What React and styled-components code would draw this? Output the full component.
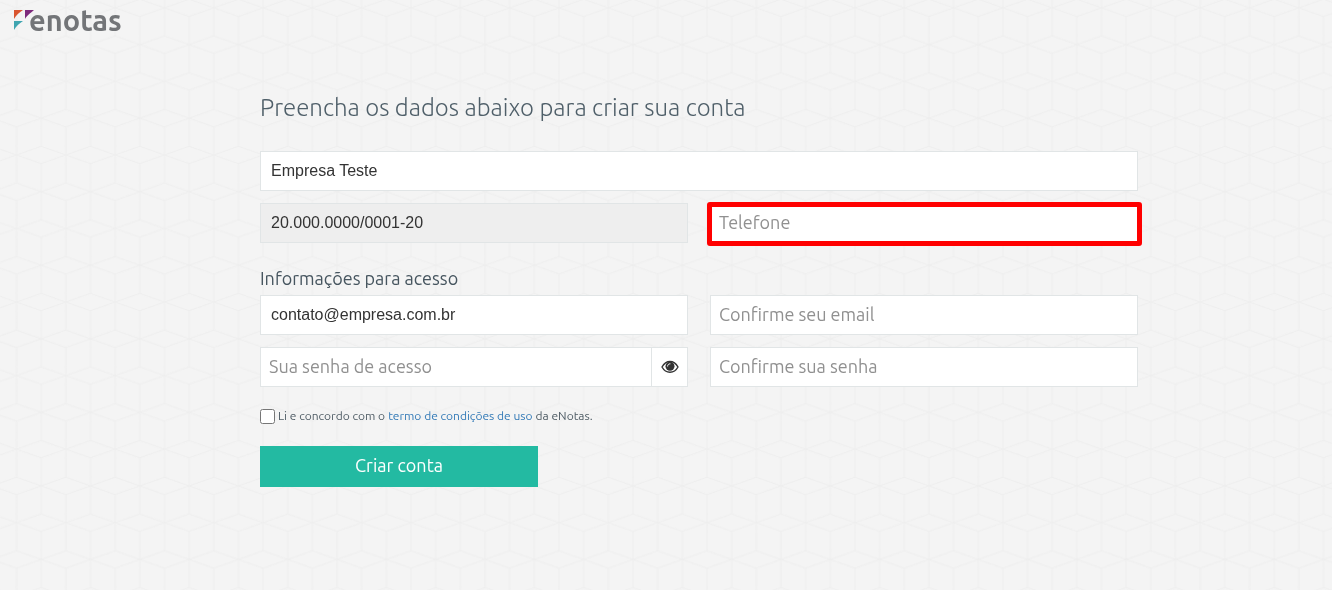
import React from "react";
import styled, { createGlobalStyle } from "styled-components";

const GlobalStyle = createGlobalStyle`
  * {
    box-sizing: border-box;
  }

  body {
    margin: 0;
    background: #f4f4f4;
    color: #4f5c65;
    font-family: Ubuntu, "Noto Sans", sans-serif;
  }
`;

const Backdrop = styled.svg`
  position: fixed;
  inset: 0;
  z-index: -1;
  width: 100%;
  height: 100%;
`;

const Header = styled.header`
  display: flex;
  align-items: flex-start;
  padding: 4px 14px 0;
`;

const Logo = styled.a`
  display: flex;
  align-items: flex-start;
  color: #737578;
  font-family: Ubuntu, "Noto Sans", sans-serif;
  font-size: 29px;
  font-weight: 600;
  line-height: 32px;
  text-decoration: none;

  svg {
    width: 20px;
    height: 20px;
    margin: 6px -5px 0 0;
  }
`;

const Main = styled.main`
  padding: 56px 194px 40px 260px;
`;

const Title = styled.h1`
  margin: 0 0 27px;
  color: #4f5f69;
  font-size: 24px;
  font-weight: 300;
  line-height: 32px;
`;

const Fields = styled.div`
  display: grid;
  grid-template-columns: 1fr 1fr;
  gap: 12px 22px;
`;

const Field = styled.div`
  position: relative;
  display: flex;
  grid-column: ${({ $wide }) => ($wide ? "1 / -1" : "auto")};
`;

const HighlightedField = styled(Field)`
  &::after {
    content: "";
    position: absolute;
    inset: -1px -4px -3px -3px;
    border: 5px solid #ff0000;
    border-radius: 3px;
    pointer-events: none;
  }
`;

const Input = styled.input`
  flex: 1;
  min-width: 0;
  height: 40px;
  padding: 0 10px;
  border: 1px solid #e1e5e6;
  border-radius: 0;
  background: ${({ readOnly }) => (readOnly ? "#eeeeee" : "#ffffff")};
  color: #333333;
  font-family: "Liberation Sans", Arial, sans-serif;
  font-size: 16px;
  outline: none;

  &:placeholder-shown {
    padding: 0 8px 2px;
    font-family: Ubuntu, "Noto Sans", sans-serif;
    font-size: 18px;
  }

  &::placeholder {
    color: #909090;
    opacity: 1;
  }
`;

const RevealButton = styled.button`
  display: flex;
  align-items: center;
  justify-content: center;
  width: 36px;
  padding: 0;
  border: 1px solid #e1e5e6;
  border-left: none;
  background: #ffffff;
  cursor: pointer;

  svg {
    width: 18px;
    height: 14px;
  }
`;

const SectionTitle = styled.h2`
  margin: 22px 0 4px;
  color: #46555f;
  font-size: 18px;
  font-weight: 400;
  line-height: 26px;
`;

const Terms = styled.div`
  display: flex;
  align-items: center;
  gap: 3px;
  margin: 18px 0 19px;
  font-size: 12px;
  line-height: 22px;

  input {
    width: 15px;
    height: 15px;
    margin: 0;
  }

  a {
    color: #337ab7;
    text-decoration: none;
  }
`;

const SubmitButton = styled.button`
  width: 278px;
  height: 41px;
  padding: 0 0 4px;
  border: none;
  background: #23baa2;
  color: #ffffff;
  font-family: inherit;
  font-size: 18px;
  cursor: pointer;
`;

const CubePattern = () => (
  <Backdrop aria-hidden="true">
    <defs>
      <pattern
        id="cubes"
        x="16.5"
        y="81.4"
        width="49.32"
        height="73.55"
        patternUnits="userSpaceOnUse"
      >
        <path
          d="M0 0L24.66 8.7L49.32 0M0 73.55L24.66 64.85L49.32 73.55M0 28.08L24.66 36.78L0 45.48M49.32 28.08L24.66 36.78L49.32 45.48M24.66 8.7V64.85M0 0V28.08M0 45.48V73.55M49.32 0V28.08M49.32 45.48V73.55"
          fill="none"
          stroke="#eeeeee"
        />
      </pattern>
    </defs>
    <rect width="100%" height="100%" fill="url(#cubes)" />
  </Backdrop>
);

const LogoMark = () => (
  <svg viewBox="0 0 20 20" aria-hidden="true">
    <path d="M0 0H9C6 2 2 5 0 9Z" fill="#d9552f" />
    <path d="M11 0H20C18 2 13 5 11 9Z" fill="#7d2a7c" />
    <path d="M0 11H9C6 13 2 16 0 20Z" fill="#3fa5b0" />
  </svg>
);

const EyeIcon = () => (
  <svg viewBox="0 0 18 14" aria-hidden="true">
    <path
      d="M1 7C3 3.4 6 1.5 9 1.5S15 3.4 17 7C15 10.6 12 12.2 9 12.2S3 10.6 1 7Z"
      fill="none"
      stroke="#333333"
      strokeWidth="1.4"
    />
    <circle cx="9" cy="6.3" r="4.5" fill="#333333" />
    <path
      d="M6.6 6.1C6.6 4.700 7.500 3.800 9 3.800"
      fill="none"
      stroke="#ffffff"
      strokeWidth="1"
      strokeLinecap="round"
    />
  </svg>
);

export default function App() {
  return (
    <>
      <GlobalStyle />
      <CubePattern />
      <Header>
        <Logo href="#">
          <LogoMark />
          enotas
        </Logo>
      </Header>
      <Main>
        <Title>Preencha os dados abaixo para criar sua conta</Title>
        <form>
          <Fields>
            <Field $wide>
              <Input aria-label="Empresa" defaultValue="Empresa Teste" />
            </Field>
            <Field>
              <Input
                aria-label="CNPJ"
                defaultValue="20.000.0000/0001-20"
                readOnly
              />
            </Field>
            <HighlightedField>
              <Input type="tel" aria-label="Telefone" placeholder="Telefone" />
            </HighlightedField>
          </Fields>
          <SectionTitle>Informações para acesso</SectionTitle>
          <Fields>
            <Field>
              <Input
                type="email"
                aria-label="Email"
                defaultValue="contato@empresa.com.br"
              />
            </Field>
            <Field>
              <Input
                type="email"
                aria-label="Confirme seu email"
                placeholder="Confirme seu email"
              />
            </Field>
            <Field>
              <Input
                type="password"
                aria-label="Sua senha de acesso"
                placeholder="Sua senha de acesso"
              />
              <RevealButton type="button" aria-label="Mostrar senha">
                <EyeIcon />
              </RevealButton>
            </Field>
            <Field>
              <Input
                type="password"
                aria-label="Confirme sua senha"
                placeholder="Confirme sua senha"
              />
            </Field>
          </Fields>
          <Terms>
            <input type="checkbox" id="terms" />
            <label htmlFor="terms">Li e concordo com o</label>
            <a href="#">termo de condições de uso</a>
            <span>da eNotas.</span>
          </Terms>
          <SubmitButton type="button">Criar conta</SubmitButton>
        </form>
      </Main>
    </>
  );
}
